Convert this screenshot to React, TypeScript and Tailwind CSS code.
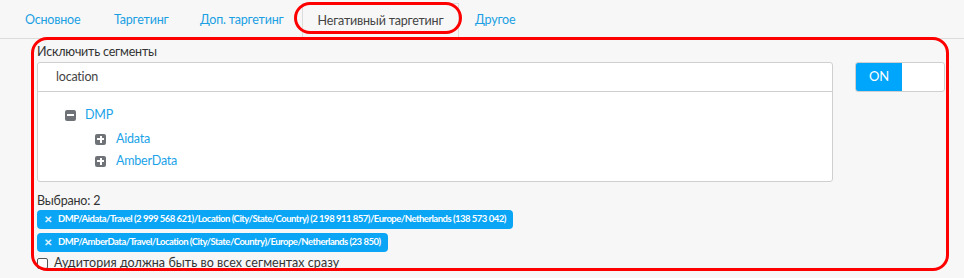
import React from "react";

const font = { fontFamily: 'Lato, "Liberation Sans", sans-serif' };

function Box({ minus }: { minus?: boolean }) {
  return (
    <span className="w-[11px] h-[11px] bg-[#6f7378] rounded-[2px] relative inline-block shrink-0">
      <span className="absolute left-[2px] right-[2px] top-[4.5px] h-[2px] bg-white" />
      {!minus && <span className="absolute top-[2px] bottom-[2px] left-[4.5px] w-[2px] bg-white" />}
    </span>
  );
}

function Chip({ text }: { text: string }) {
  return (
    <div className="inline-flex items-center h-[19px] bg-[#0aa5f5] rounded-[4px] pl-[7px] pr-[7px] text-white text-[9.5px] font-bold tracking-[-0.5px] w-fit">
      <span className="mr-[6px] text-[10px] text-[#dff2ff] tracking-normal">✕</span>
      <span>{text}</span>
    </div>
  );
}

export default function App() {
  return (
    <div className="w-[964px] h-[278px] bg-[#f7f7f7] relative overflow-hidden text-[#333] text-[12.5px] tracking-[-0.2px]" style={font}>
      <div className="flex h-[39px] border-b border-[#dcdcdc] items-end">
        <div className="text-[#1a9fe3] pl-[25px] w-[114px] h-[39px] flex items-center pt-[3px]">Основное</div>
        <div className="text-[#1a9fe3] w-[86px] h-[39px] flex items-center pt-[3px]">Таргетинг</div>
        <div className="text-[#1a9fe3] w-[102px] h-[39px] flex items-center pt-[3px]">Доп. таргетинг</div>
        <div className="h-[36px] w-[157px] border-x border-t border-[#dcdcdc] bg-[#f7f7f7] -mb-px flex items-center justify-center text-[#444]">Негативный таргетинг</div>
        <div className="text-[#1a9fe3] ml-[16px] h-[39px] flex items-center pt-[3px]">Другое</div>
      </div>

      <div className="flex pl-[37px] pt-[4px]">
        <div className="w-[796px]">
          <div className="leading-[18px] h-[19px] text-[#333]">Исключить сегменты</div>
          <div className="border border-[#cfcfcf] rounded-[3px] bg-white">
            <div className="h-[29px] border-b border-[#cfcfcf] flex items-center pl-[18px] text-[#444] pt-[1px]">location</div>
            <div className="h-[89px] pt-[14px] pl-[27px] text-[#1aa3e8]">
              <div className="flex items-center gap-[9px] h-[18px]"><Box minus /><span>DMP</span></div>
              <div className="flex items-center gap-[10px] h-[18px] ml-[30px] mt-[6px]"><Box /><span>Aidata</span></div>
              <div className="flex items-center gap-[10px] h-[18px] ml-[30px] mt-[4px]"><Box /><span>AmberData</span></div>
            </div>
          </div>
        </div>
        <div className="ml-[22px] mt-[19px] w-[90px] h-[30px] border border-[#cfcfcf] rounded-[3px] bg-white flex overflow-hidden">
          <div className="w-[46px] bg-[#00a6fb] text-white text-[13px] flex items-center justify-center">ON</div>
        </div>
      </div>

      <div className="pl-[37px] pt-[10px]">
        <div className="h-[18px] leading-[18px] text-[#333]">Выбрано: 2</div>
        <div className="flex flex-col gap-[4px]">
          <Chip text="DMP/Aidata/Travel (2 999 568 621)/Location (City/State/Country) (2 198 911 857)/Europe/Netherlands (138 573 042)" />
          <Chip text="DMP/AmberData/Travel/Location (City/State/Country)/Europe/Netherlands (23 850)" />
        </div>
        <div className="flex items-center mt-[4px] h-[14px] text-[#333]">
          <span className="w-[11px] h-[11px] border border-[#555] rounded-[2px] bg-white mr-[6px]" />
          <span className="tracking-[0.05px]">Аудитория должна быть во всех сегментах сразу</span>
        </div>
      </div>

      <div className="absolute left-[31px] top-[37px] w-[918px] h-[234px] border-[3px] border-[#ff0000] rounded-[16px] pointer-events-none" />
      <div className="absolute left-[294px] top-[2px] w-[168px] h-[32px] border-[3px] border-[#ff0000] rounded-full pointer-events-none" />
    </div>
  );
}
